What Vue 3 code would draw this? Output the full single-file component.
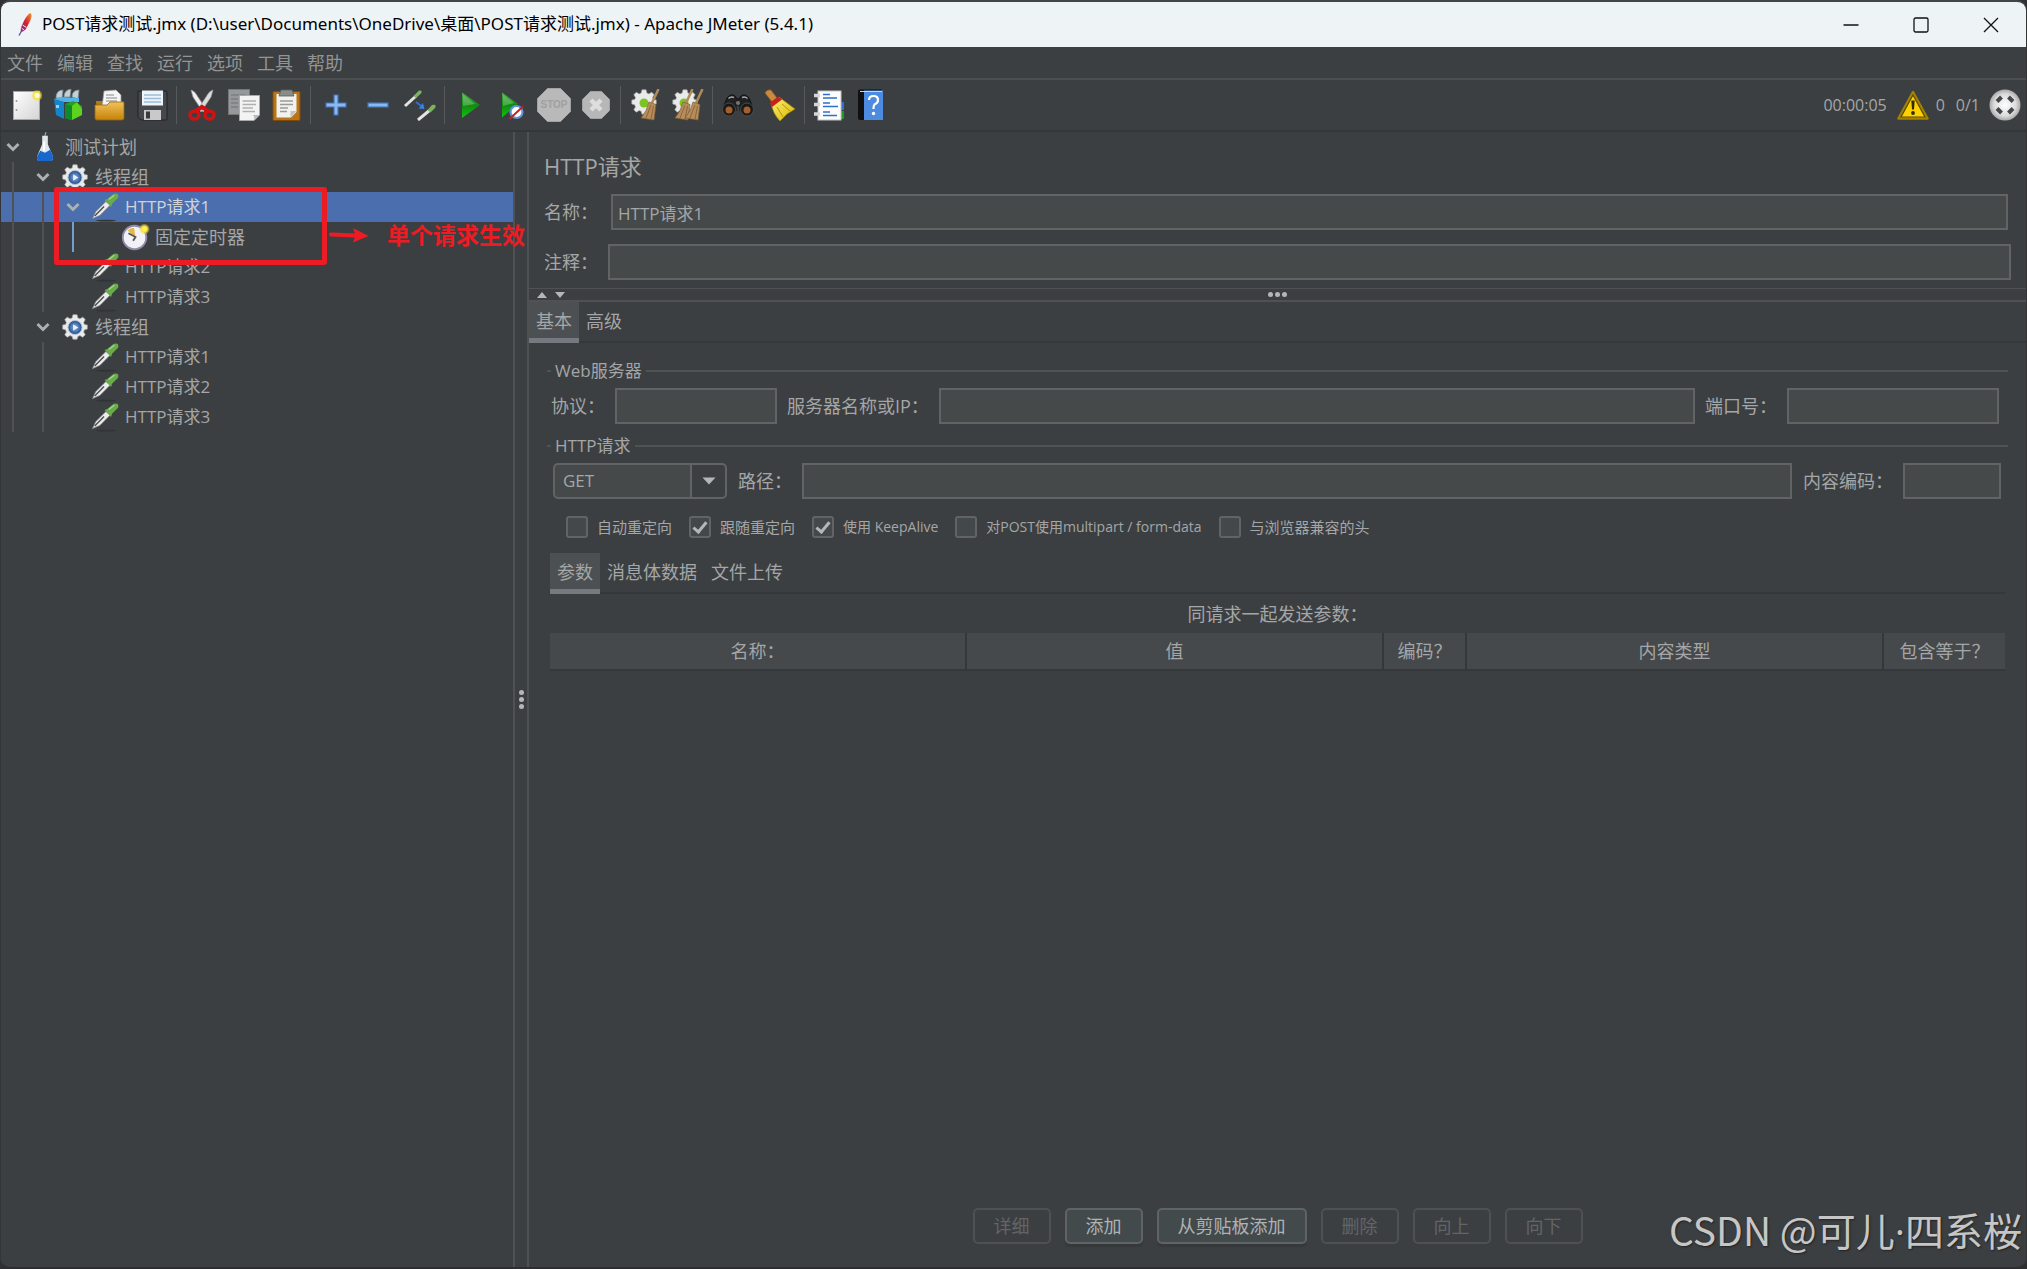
<template>
  <div class="window">
    <!-- 图标库 -->
    <svg class="sprite" aria-hidden="true">
      <defs>
        <linearGradient id="g-paper" x1="0" y1="0" x2="1" y2="1">
          <stop offset="0" stop-color="#ffffff" />
          <stop offset="1" stop-color="#d4d4d4" />
        </linearGradient>
        <linearGradient id="g-folder" x1="0" y1="0" x2="0" y2="1">
          <stop offset="0" stop-color="#f0c25a" />
          <stop offset="1" stop-color="#c58208" />
        </linearGradient>
        <linearGradient id="g-play" x1="0" y1="0" x2="0" y2="1">
          <stop offset="0" stop-color="#4fb050" />
          <stop offset="0.5" stop-color="#118a11" />
          <stop offset="1" stop-color="#12c412" />
        </linearGradient>
        <linearGradient id="g-broom" x1="0" y1="0" x2="1" y2="1">
          <stop offset="0" stop-color="#fff27a" />
          <stop offset="1" stop-color="#d8b400" />
        </linearGradient>
        <linearGradient id="g-feather" x1="1" y1="0" x2="0" y2="1">
          <stop offset="0" stop-color="#f69a23" />
          <stop offset="0.5" stop-color="#d22334" />
          <stop offset="1" stop-color="#7a2d8c" />
        </linearGradient>
        <radialGradient id="g-ball">
          <stop offset="0" stop-color="#ffffff" />
          <stop offset="0.7" stop-color="#dcdcdc" />
          <stop offset="1" stop-color="#a8a8a8" />
        </radialGradient>
        <radialGradient id="g-glow">
          <stop offset="0" stop-color="#fffbd0" />
          <stop offset="0.5" stop-color="#f5e03c" />
          <stop offset="1" stop-color="#f5e03c" stop-opacity="0" />
        </radialGradient>
        <radialGradient id="g-blue">
          <stop offset="0" stop-color="#8fb4e0" />
          <stop offset="1" stop-color="#1f4b8e" />
        </radialGradient>
      </defs>

      <symbol id="i-feather" viewBox="0 0 16 26">
        <path d="M13 1 Q16 2 13.500 8 L9 17 Q7 20 4 20 Q3 16 6 11 Q9 4 13 1Z" fill="url(#g-feather)" />
        <path d="M4.500 16 L7.500 18.500 M5.500 13 L9.500 15.500" stroke="#f4e9ef" stroke-width="1" />
        <path d="M4.500 19 L2 23.500" stroke="#6f4b97" stroke-width="1.300" />
      </symbol>

      <symbol id="i-new" viewBox="0 0 32 32">
        <rect x="3.500" y="2.500" width="26" height="28" fill="url(#g-paper)" stroke="#a6a6a6" />
        <circle cx="6.500" cy="12" r="1" fill="#999" />
        <circle cx="6.500" cy="21" r="1" fill="#999" />
        <circle cx="27" cy="6.500" r="6" fill="url(#g-glow)" />
        <circle cx="27" cy="6.500" r="2.500" fill="#fffde0" />
      </symbol>

      <symbol id="i-templates" viewBox="0 0 32 32">
        <path d="M4 9 Q4 1 11 1 L10 9Z M12 8 Q12 1 19 0 L18 8Z M20 8 Q20 1 27 1 L26 10Z" fill="#c5d0d6" stroke="#7f8b92" stroke-width="0.800" />
        <path d="M2 10 L12 13 L12 30 L4 26Z" fill="#1784c9" />
        <path d="M2 10 L9 8 L27 9 L27 13 L12 13Z" fill="#4fb4ea" />
        <path d="M4 16 h3 v3 h-3z" fill="#8fd4f7" />
        <path d="M13 15 L21 12 L30 17 L30 26 L19 31 L13 29Z" fill="#23a023" />
        <path d="M20 17 L25 13 L30 20 L30 26 L20 31Z" fill="#5ed21f" />
        <path d="M13 15 L20 17 V31 L13 29Z" fill="#0f8a2b" />
      </symbol>

      <symbol id="i-open" viewBox="0 0 32 32">
        <path d="M2 12 H28 Q29 12 29 14 V29 H3Z" fill="#b27a12" />
        <path d="M10 2 L22 1 L27 6 V18 H8Z" fill="#f5f5f5" stroke="#999" stroke-width="0.700" />
        <path d="M12 6 H20 M12 9 H23 M12 12 H23" stroke="#888" stroke-width="1.200" />
        <path d="M1 16 H13 L16 13 H30 V29 Q30 31 28 31 H3 Q1 31 1 29Z" fill="url(#g-folder)" stroke="#94670f" stroke-width="0.800" />
      </symbol>

      <symbol id="i-save" viewBox="0 0 32 32">
        <path d="M2 2 H29 Q31 2 31 4 V30 Q31 31 30 31 H5 L2 28Z" fill="#47484d" stroke="#222" />
        <rect x="6" y="1.500" width="21" height="15" fill="#edf4fa" />
        <path d="M8 6 H25 M8 9.500 H25 M8 13 H25" stroke="#9fbcd8" stroke-width="1.500" />
        <rect x="8" y="21" width="17" height="10" fill="#c9c9c9" />
        <rect x="10" y="22.500" width="4" height="7" fill="#3a3b40" />
      </symbol>

      <symbol id="i-cut" viewBox="0 0 32 32">
        <path d="M5 1 Q9 2 12 8 L20 20 L17 23 L7 8Z" fill="#f0f0f0" stroke="#999" stroke-width="0.700" />
        <path d="M27 1 Q23 2 20 8 L12 20 L15 23 L25 8Z" fill="#dcdcdc" stroke="#999" stroke-width="0.700" />
        <ellipse cx="8.500" cy="26" rx="4.500" ry="4" fill="none" stroke="#d01212" stroke-width="3.500" />
        <ellipse cx="23.500" cy="26" rx="4.500" ry="4" fill="none" stroke="#d01212" stroke-width="3.500" />
        <path d="M10 22 L16 18 L22 22" fill="none" stroke="#d01212" stroke-width="4" />
      </symbol>

      <symbol id="i-copy" viewBox="0 0 32 32">
        <rect x="0.500" y="0.500" width="21" height="25" fill="#96999a" stroke="#777" />
        <path d="M3 6 H18 M3 10 H10 M3 14 H10 M3 18 H10" stroke="#7c7f80" stroke-width="1.300" />
        <path d="M11.500 6.500 H31.500 V26 L26 31.500 H11.500Z" fill="#f3f3f3" stroke="#aaa" />
        <path d="M14.500 12 H28 M14.500 15.500 H28 M14.500 19 H25 M14.500 22.500 H27" stroke="#b0b0b0" stroke-width="1.400" />
        <path d="M31 26 L26 31 Q27 28 25 26Z" fill="#bbb" />
      </symbol>

      <symbol id="i-paste" viewBox="0 0 32 32">
        <rect x="3" y="2.500" width="27" height="29" rx="1" fill="#b9741a" stroke="#7e4c0a" />
        <path d="M6.500 5 H26.500 V23 L21 28.500 H6.500Z" fill="#f1f1ee" />
        <path d="M11 1 H22 L24 7 H9Z" fill="#8a8c88" stroke="#5d5f5b" stroke-width="0.800" />
        <path d="M10 12 H23 M10 15.500 H23 M10 19 H18 M10 22.500 H17" stroke="#9b9b9b" stroke-width="1.400" />
        <path d="M26.500 22 L20.500 28.500 V22Z" fill="#c2c2c2" />
      </symbol>

      <symbol id="i-plus" viewBox="0 0 32 32">
        <path d="M14 6 H18 V14 H26 V18 H18 V26 H14 V18 H6 V14 H14Z" fill="#89b9ee" stroke="#4276bd" stroke-width="1.200" />
      </symbol>

      <symbol id="i-minus" viewBox="0 0 32 32">
        <rect x="6" y="14" width="20" height="4" fill="#89b9ee" stroke="#4276bd" stroke-width="1.200" />
      </symbol>

      <symbol id="i-toggle" viewBox="0 0 32 32">
        <path d="M1 17 L12 7" stroke="#e4e4e4" stroke-width="3" />
        <path d="M9.500 7 L15 1.500 Q19 1 17 4.500 L12 9Z" fill="#78b55c" />
        <path d="M14 31 L26 21" stroke="#e4e4e4" stroke-width="3" />
        <path d="M23.500 21 L28 16 Q33 14.500 31 19 L26.500 23.500Z" fill="#78b55c" />
        <path d="M12 13 L18 17.500" stroke="#2c70d8" stroke-width="2" />
        <path d="M20.500 20 L14.500 19.500 L19 14Z" fill="#3b7fe6" />
      </symbol>

      <symbol id="i-start" viewBox="0 0 32 32">
        <path d="M8 3.500 L26 16 L8 29Z" fill="url(#g-play)" />
        <path d="M9 5.500 L21 15 L9 17Z" fill="#8ed08f" opacity="0.450" />
      </symbol>

      <symbol id="i-start-no-timers" viewBox="0 0 32 32">
        <path d="M6 3.500 L22 15 L6 28.500Z" fill="url(#g-play)" />
        <path d="M7 5.500 L18 14 L7 17Z" fill="#8ed08f" opacity="0.450" />
        <circle cx="20.500" cy="23" r="6" fill="#fff" stroke="#5e93d8" stroke-width="2.200" />
        <path d="M13.500 30 L27 17.500" stroke="#c62222" stroke-width="2" />
      </symbol>

      <symbol id="i-stop" viewBox="0 0 34 34">
        <path d="M10.500 0.500 H23.500 L33.500 10.500 V23.500 L23.500 33.500 H10.500 L0.500 23.500 V10.500Z" fill="#b9b9b9" stroke="#a2a2a2" />
      </symbol>

      <symbol id="i-shutdown" viewBox="0 0 32 32">
        <path d="M10.500 2.500 H21.500 L29.500 10.500 V21.500 L21.500 29.500 H10.500 L2.500 21.500 V10.500Z" fill="#b7b7b7" stroke="#a2a2a2" />
        <path d="M11 11 L21 21 M21 11 L11 21" stroke="#dedede" stroke-width="4.500" />
      </symbol>

      <symbol id="i-gear" viewBox="0 0 32 32">
        <path
          d="M13.500 1 H18.500 L19.500 5 L22 6 L25.500 4 L28.500 7 L26.500 10.500 L27.500 13 L31 13.500 V18.500 L27.500 19.500 L26.500 22 L28.500 25.500 L25.500 28.500 L22 26.500 L19.500 27.500 L18.500 31 H13.500 L12.500 27.500 L10 26.500 L6.500 28.500 L3.500 25.500 L5.500 22 L4.500 19.500 L1 18.500 V13.500 L4.500 13 L5.500 10.500 L3.500 7 L6.500 4 L10 6 L12.500 5Z"
          fill="#e9eaea" stroke="#a9abab" stroke-width="0.800" />
      </symbol>

      <symbol id="i-broomlet" viewBox="0 0 20 32">
        <path d="M18.500 0 L12 14" stroke="#b08a58" stroke-width="2.500" />
        <path d="M9 13 L16 15.500 Q15 24 14 31 L1 29 Q7 22 9 13Z" fill="#b78d5c" stroke="#7d5c34" stroke-width="0.700" />
        <path d="M11 16 L6 29 M13.500 17 L11 30" stroke="#7d5c34" stroke-width="0.800" />
      </symbol>

      <symbol id="i-clear" viewBox="0 0 32 32">
        <use href="#i-gear" x="1" y="0" width="26" height="26" />
        <circle cx="14" cy="14" r="4.500" fill="#7cc520" />
        <use href="#i-broomlet" x="10" y="0" width="20" height="32" />
      </symbol>

      <symbol id="i-clear-all" viewBox="0 0 32 32">
        <use href="#i-gear" x="0" y="0" width="26" height="26" />
        <circle cx="12" cy="14" r="4.500" fill="#7cc520" />
        <use href="#i-broomlet" x="2" y="0" width="20" height="32" />
        <use href="#i-broomlet" x="12" y="0" width="20" height="32" />
      </symbol>

      <symbol id="i-search" viewBox="0 0 32 32">
        <path d="M5 9 Q9 4 13 7 L15 10 H17 L19 7 Q23 4 27 9 L31 19 L18 22 V16 H14 V22 L1 19Z" fill="#202122" stroke="#0f0f10" />
        <path d="M6.500 9.500 Q9 7 12 8.500 M20 8.500 Q23 7 25.500 9.500" stroke="#a7a7a7" stroke-width="1.500" fill="none" />
        <circle cx="7" cy="20.500" r="6.500" fill="#19191a" stroke="#4c4c4d" />
        <circle cx="25" cy="20.500" r="6.500" fill="#19191a" stroke="#4c4c4d" />
        <circle cx="7" cy="21" r="3.500" fill="#a65f2b" />
        <circle cx="25" cy="21" r="3.500" fill="#a65f2b" />
        <circle cx="16" cy="14" r="2" fill="#777" />
      </symbol>

      <symbol id="i-reset" viewBox="0 0 32 32">
        <path d="M1 4 Q3 0 7 1 L13 9 L8 13Z" fill="#c98a3f" stroke="#8a5a1e" stroke-width="0.700" />
        <path d="M7 14 L15 8 L31 20 L23 25 L16 32 Q9 25 7 14Z" fill="url(#g-broom)" stroke="#a58a00" stroke-width="0.700" />
        <path d="M6 13.500 L14.500 7.500 L18 10.500 L8 18Z" fill="#c8201c" />
        <path d="M13 18 L19 28 M18 15 L26 22" stroke="#b39600" stroke-width="1" />
      </symbol>

      <symbol id="i-functions" viewBox="0 0 32 32">
        <rect x="25" y="13" width="5" height="8" fill="#2f6fd6" />
        <rect x="25" y="22" width="5" height="8" fill="#1f9b2a" />
        <rect x="4" y="2" width="23" height="29" fill="#fcfcfc" stroke="#c4c4c4" />
        <path d="M0 6.500 H6 M0 15.500 H6 M0 25 H6" stroke="#d6d6d6" stroke-width="3.500" />
        <path d="M9 5.500 H16 M9 9 H23 M9 14 H16 M9 17.500 H24 M9 23 H16 M9 26.500 H23" stroke="#2d6fcd" stroke-width="1.500" />
      </symbol>

      <symbol id="i-help" viewBox="0 0 32 32">
        <path d="M2 2 Q2 0.500 4 0.500 H26 V31 H4 Q2 31 2 29Z" fill="#111" />
        <rect x="8" y="1.500" width="19" height="29.500" fill="#4d8be0" />
        <path d="M4 2.500 H26" stroke="#c7d7ea" stroke-width="1.200" />
        <path d="M13 11 Q13 7 17.500 7 Q22 7 22 11 Q22 14 18.500 15.500 Q17.500 16.500 17.500 20" fill="none" stroke="#fff" stroke-width="2.200" />
        <circle cx="17.500" cy="24.500" r="1.700" fill="#fff" />
      </symbol>

      <symbol id="i-warning" viewBox="0 0 32 30">
        <path d="M16 2 L30.500 28.500 H1.500Z" fill="#ffd100" stroke="#a28200" stroke-width="2.500" stroke-linejoin="round" />
        <path d="M16 5 L28 27 H4Z" fill="none" stroke="#5a4800" stroke-width="1.200" />
        <path d="M14.300 10.500 H17.700 L17 19.500 H15Z" fill="#332b00" />
        <circle cx="16" cy="23" r="1.900" fill="#332b00" />
      </symbol>

      <symbol id="i-status" viewBox="0 0 32 32">
        <circle cx="16" cy="16" r="15.500" fill="url(#g-ball)" />
        <path d="M8 12.500 L12.500 8 M19.500 8 L24 12.500 M8 19.500 L12.500 24 M19.500 24 L24 19.500" stroke="#44474a" stroke-width="4" />
      </symbol>

      <symbol id="i-plan" viewBox="0 0 32 32">
        <path d="M17 0 L15.500 6" stroke="#9aa" stroke-width="1.200" />
        <path d="M13 4 H19 V13 L24.500 26 Q25 31 21 31 H11 Q7 31 7.500 26 L13 13Z" fill="#dfe7ec" />
        <path d="M11 20 L16 22 L21.500 19 L24.500 26 Q25 31 21 31 H11 Q7 31 7.500 26Z" fill="#1767cf" />
        <path d="M15 10 V20" stroke="#fff" stroke-width="2" />
      </symbol>

      <symbol id="i-group" viewBox="0 0 32 32">
        <use href="#i-gear" x="2" y="2" width="28" height="28" />
        <circle cx="16" cy="16.500" r="7.500" fill="url(#g-blue)" stroke="#b9c6d8" />
        <path d="M14 13 L19.500 16.500 L14 20Z" fill="#e9f1fa" />
      </symbol>

      <symbol id="i-sampler" viewBox="0 0 32 32">
        <ellipse cx="17" cy="30.500" rx="11" ry="1" fill="#313436" />
        <path d="M2.500 28.500 L6 21 L17 10 L21.500 14 L10.500 25Z" fill="#ececec" stroke="#77797b" stroke-width="0.800" />
        <path d="M5 25.500 L15 15.500" stroke="#4a4d4f" stroke-width="1.500" />
        <path d="M15.500 8.500 L18.500 7.500 L25 2 Q31.500 0.500 30 6 L23.500 12.500 L22.500 16Z" fill="#69ab4b" />
        <path d="M20 8 L26 3.500" stroke="#a2d68a" stroke-width="1.500" />
      </symbol>

      <symbol id="i-timer" viewBox="0 0 32 32">
        <circle cx="15.500" cy="16.500" r="12.500" fill="#f2f1f5" stroke="#8f8ba8" stroke-width="2" />
        <path d="M8 9 Q12 6 15 6.500 L16.500 16Z" fill="#e4b74a" />
        <path d="M9 12 L16.500 16 L14 20" fill="none" stroke="#555" stroke-width="2" />
        <circle cx="26" cy="7.500" r="6" fill="url(#g-glow)" />
        <circle cx="26" cy="7.500" r="2.500" fill="#fdf04f" />
      </symbol>
    </svg>

    <header class="title-bar">
      <svg class="feather"><use href="#i-feather" /></svg>
      <h1 class="title">POST请求测试.jmx (D:\user\Documents\OneDrive\桌面\POST请求测试.jmx) - Apache JMeter (5.4.1)</h1>
      <button class="win-btn" aria-label="最小化">
        <svg viewBox="0 0 16 16"><path d="M0.500 8 H15.500" /></svg>
      </button>
      <button class="win-btn" aria-label="最大化">
        <svg viewBox="0 0 16 16"><rect x="1" y="1" width="14" height="14" rx="1.500" /></svg>
      </button>
      <button class="win-btn" aria-label="关闭">
        <svg viewBox="0 0 16 16"><path d="M1 1 L15 15 M15 1 L1 15" /></svg>
      </button>
    </header>

    <nav class="menu-bar">
      <button v-for="menu in menus" :key="menu" class="menu">{{ menu }}</button>
    </nav>

    <div class="toolbar">
      <div v-for="(group, gi) in tools" :key="gi" class="tool-group">
        <button v-for="tool in group" :key="tool" class="tool" :aria-label="tool">
          <svg :class="{ large: tool === 'stop' }"><use :href="`#i-${tool}`" /></svg>
          <span v-if="tool === 'stop'" class="stop-text">STOP</span>
        </button>
      </div>
      <div class="status">
        <span>00:00:05</span>
        <svg class="warning"><use href="#i-warning" /></svg>
        <span>0</span>
        <span class="threads">0/1</span>
        <svg class="state"><use href="#i-status" /></svg>
      </div>
    </div>

    <main class="workspace">
      <aside class="tree">
        <div
          v-for="(node, index) in nodes"
          :key="index"
          class="node"
          :class="{ selected: node.selected }"
        >
          <span
            v-for="level in node.depth"
            :key="level"
            class="guide"
            :class="{ active: level === 3 }"
          ></span>
          <span class="toggle">
            <svg v-if="node.open" viewBox="0 0 14 10"><path d="M1.500 2 L7 7.500 L12.500 2" /></svg>
          </span>
          <svg class="node-icon"><use :href="`#i-${node.icon}`" /></svg>
          <span :class="{ mixed: node.icon === 'sampler' }">{{ node.name }}</span>
        </div>

        <!-- 标注 -->
        <div class="mark-box"></div>
        <div class="mark-note">
          <svg viewBox="0 0 40 16"><path d="M2 7.500 L26 8.500" stroke="#ed1c24" stroke-width="4" stroke-linecap="round" /><path d="M24 1 L39.500 9 L24 15.500 L26.500 8.500Z" fill="#ed1c24" /></svg>
          <span>单个请求生效</span>
        </div>
      </aside>

      <div class="splitter"><i></i><i></i><i></i></div>

      <section class="panel">
        <div class="panel-head">
          <h2>HTTP请求</h2>
          <div class="field name-field">
            <label for="name">名称：</label>
            <input id="name" v-model="name" type="text" />
          </div>
          <div class="field comment-field">
            <label for="comment">注释：</label>
            <input id="comment" type="text" />
          </div>
        </div>

        <div class="divider">
          <svg class="arrows" viewBox="0 0 30 8"><path d="M0 7 L5 1 L10 7Z M18 1 H28 L23 7Z" /></svg>
          <div class="dots"><i></i><i></i><i></i></div>
        </div>

        <div class="tabs">
          <button class="tab current">基本</button>
          <button class="tab">高级</button>
        </div>

        <div class="panel-body">
          <fieldset>
            <legend>Web服务器</legend>
            <div class="line">
              <label for="protocol" class="w-short">协议：</label>
              <input id="protocol" class="protocol" type="text" />
              <label for="server" class="w-server">服务器名称或IP：</label>
              <input id="server" class="grow" type="text" />
              <label for="port" class="w-port">端口号：</label>
              <input id="port" class="port" type="text" />
            </div>
          </fieldset>

          <fieldset>
            <legend>HTTP请求</legend>
            <div class="line request-line">
              <div class="combo">
                <select v-model="method" aria-label="请求方法">
                  <option>GET</option>
                  <option>POST</option>
                </select>
                <svg viewBox="0 0 14 8"><path d="M0.500 0.500 H13.500 L7 7.500Z" /></svg>
              </div>
              <label for="path" class="w-short">路径：</label>
              <input id="path" class="grow" type="text" />
              <label for="encoding" class="w-encoding">内容编码：</label>
              <input id="encoding" class="encoding" type="text" />
            </div>
            <div class="checks">
              <label v-for="item in options" :key="item.label" :class="{ latin: item.latin }">
                <input v-model="item.checked" type="checkbox" />
                <span>{{ item.label }}</span>
              </label>
            </div>
          </fieldset>

          <div class="tabs inner">
            <button class="tab current">参数</button>
            <button class="tab">消息体数据</button>
            <button class="tab">文件上传</button>
          </div>

          <table>
            <caption>同请求一起发送参数：</caption>
            <colgroup>
              <col />
              <col />
              <col class="col-encode" />
              <col />
              <col class="col-equals" />
            </colgroup>
            <thead>
              <tr>
                <th v-for="column in columns" :key="column">{{ column }}</th>
              </tr>
            </thead>
          </table>

          <div class="actions">
            <button v-for="action in actions" :key="action.label" :disabled="action.disabled">
              {{ action.label }}
            </button>
          </div>
        </div>
      </section>
    </main>

    <div class="watermark">CSDN @可儿<span class="dot">·</span>四系桜</div>
  </div>
</template>

<script setup>
import { ref } from 'vue'

const menus = ['文件', '编辑', '查找', '运行', '选项', '工具', '帮助']

const tools = [
  ['new', 'templates', 'open', 'save'],
  ['cut', 'copy', 'paste'],
  ['plus', 'minus', 'toggle'],
  ['start', 'start-no-timers', 'stop', 'shutdown'],
  ['clear', 'clear-all'],
  ['search', 'reset'],
  ['functions', 'help']
]

const nodes = [
  { name: '测试计划', icon: 'plan', depth: 0, open: true },
  { name: '线程组', icon: 'group', depth: 1, open: true },
  { name: 'HTTP请求1', icon: 'sampler', depth: 2, open: true, selected: true },
  { name: '固定定时器', icon: 'timer', depth: 3 },
  { name: 'HTTP请求2', icon: 'sampler', depth: 2 },
  { name: 'HTTP请求3', icon: 'sampler', depth: 2 },
  { name: '线程组', icon: 'group', depth: 1, open: true },
  { name: 'HTTP请求1', icon: 'sampler', depth: 2 },
  { name: 'HTTP请求2', icon: 'sampler', depth: 2 },
  { name: 'HTTP请求3', icon: 'sampler', depth: 2 }
]

const columns = ['名称：', '值', '编码？', '内容类型', '包含等于？']

const name = ref('HTTP请求1')
const method = ref('GET')

const options = ref([
  { label: '自动重定向', checked: false },
  { label: '跟随重定向', checked: true },
  { label: '使用 KeepAlive', checked: true, latin: true },
  { label: '对POST使用multipart / form-data', checked: false, latin: true },
  { label: '与浏览器兼容的头', checked: false }
])

const actions = [
  { label: '详细', disabled: true },
  { label: '添加', disabled: false },
  { label: '从剪贴板添加', disabled: false },
  { label: '删除', disabled: true },
  { label: '向上', disabled: true },
  { label: '向下', disabled: true }
]
</script>

<style>
body {
  margin: 0;
  background: #2f3032;
}
</style>

<style scoped>
.window {
  position: relative;
  display: flex;
  flex-direction: column;
  box-sizing: border-box;
  height: 100vh;
  border: 1px solid #333537;
  border-top: 2px solid #454545;
  border-bottom: 2px solid #2c2e30;
  border-radius: 10px;
  overflow: hidden;
  background: #3c3f41;
  color: #a4a6a7;
  font-family: "Open Sans", "Noto Sans CJK SC", sans-serif;
  font-size: 18px;
  line-height: 24px;
}

.sprite {
  position: absolute;
  width: 0;
  height: 0;
}

button,
input,
select {
  box-sizing: border-box;
  margin: 0;
  font: inherit;
  color: inherit;
}

button {
  padding: 0;
  border: 0;
  background: none;
}

.mixed {
  font-size: 17px;
}

/* 标题栏 */
.title-bar {
  display: flex;
  align-items: center;
  height: 45px;
  background: #eef3f6;
  color: #000;
}

.feather {
  width: 16px;
  height: 26px;
  margin: 0 9px 0 16px;
}

.title {
  flex: 1;
  margin: 0;
  padding-bottom: 2px;
  font-family: "Noto Sans", "Noto Sans CJK SC", sans-serif;
  font-size: 17px;
  font-weight: 400;
}

.win-btn {
  width: 70px;
  height: 45px;
}

.win-btn svg {
  display: block;
  width: 16px;
  height: 16px;
  margin: 0 auto;
  fill: none;
  stroke: #111;
  stroke-width: 1.3;
}

/* 菜单与工具栏 */
.menu-bar {
  display: flex;
  gap: 14px;
  height: 31px;
  padding-left: 6px;
  border-bottom: 2px solid #4d4e4f;
}

.menu {
  color: #929495;
}

.toolbar {
  display: flex;
  align-items: center;
  height: 50px;
  padding: 0 5px 0 4px;
  border-bottom: 2px solid #34373a;
}

.tool-group {
  display: flex;
}

.tool-group + .tool-group {
  margin-left: 3px;
  padding-left: 4px;
  border-left: 1px solid #58595a;
}

.tool {
  position: relative;
  display: flex;
  align-items: center;
  justify-content: center;
  width: 42px;
  height: 38px;
}

.tool svg {
  width: 32px;
  height: 32px;
}

.tool svg.large {
  width: 34px;
  height: 34px;
}

.stop-text {
  position: absolute;
  inset: 0;
  color: #a0a0a0;
  font-family: "Liberation Sans", sans-serif;
  font-size: 10px;
  font-weight: 700;
  line-height: 38px;
  text-align: center;
}

.status {
  display: flex;
  align-items: center;
  margin-left: auto;
  font-size: 16px;
}

.warning {
  width: 32px;
  height: 30px;
  margin: 0 7px 0 10px;
}

.threads {
  margin: 0 9px 0 11px;
}

.state {
  width: 32px;
  height: 32px;
}

/* 左侧树 */
.workspace {
  flex: 1;
  display: flex;
  min-height: 0;
}

.tree {
  position: relative;
  flex: none;
  width: 512px;
}

.node {
  display: flex;
  align-items: center;
  height: 30px;
}

.node.selected {
  background: #4b6eaf;
  color: #d0d4da;
}

.guide {
  flex: none;
  width: 17px;
  height: 30px;
  margin-left: 11px;
  border-left: 2px solid #4f5152;
}

.guide.active {
  border-left-color: #6fa0d0;
}

.toggle {
  display: flex;
  justify-content: center;
  width: 24px;
}

.toggle svg {
  width: 14px;
  height: 10px;
  fill: none;
  stroke: #adb0b2;
  stroke-width: 3;
}

.node-icon {
  width: 32px;
  height: 30px;
  margin: 0 4px;
}

.mark-box {
  position: absolute;
  top: 55px;
  left: 53px;
  box-sizing: border-box;
  width: 273px;
  height: 78px;
  border: 5px solid #ed1c24;
  border-radius: 3px;
}

.mark-note {
  position: absolute;
  z-index: 1;
  top: 87px;
  left: 328px;
  display: flex;
  align-items: center;
  gap: 18px;
  color: #ed1c24;
  font-size: 23px;
  font-weight: 700;
  line-height: 32px;
  white-space: nowrap;
}

.mark-note svg {
  width: 40px;
  height: 16px;
}

.splitter {
  flex: none;
  display: flex;
  flex-direction: column;
  align-items: center;
  justify-content: center;
  gap: 2px;
  width: 12px;
  border: solid #505152;
  border-width: 0 2px;
}

.splitter i,
.dots i {
  width: 5px;
  height: 5px;
  border-radius: 50%;
  background: #b4b6b8;
}

/* 右侧面板 */
.panel {
  flex: 1;
  display: flex;
  flex-direction: column;
  min-width: 0;
}

.panel-head {
  padding: 18px 15px 8px;
}

h2 {
  margin: 0 0 12px;
  font-size: 22px;
  font-weight: 400;
  line-height: 32px;
}

.field {
  display: flex;
  align-items: center;
}

.field + .field {
  margin-top: 14px;
}

.name-field label {
  width: 67px;
}

.name-field {
  margin-right: 3px;
}

.comment-field label {
  width: 64px;
}

input[type="text"] {
  height: 36px;
  min-width: 0;
  padding: 0 5px;
  border: 2px solid #616364;
  border-radius: 0;
  outline: none;
  background: #45494a;
}

.field input {
  flex: 1;
  font-size: 17px;
}

.divider {
  position: relative;
  display: flex;
  align-items: center;
  justify-content: center;
  height: 11px;
  border: solid #505152;
  border-width: 1px 0 2px;
}

.arrows {
  position: absolute;
  left: 8px;
  width: 30px;
  height: 8px;
  fill: #b4b6b8;
}

.dots {
  display: flex;
  gap: 2px;
}

.tabs {
  display: flex;
  height: 39px;
  border-bottom: 2px solid #35383a;
}

.tab {
  height: 41px;
  padding: 2px 7px 0;
  border-bottom: 5px solid transparent;
}

.tab.current {
  border-bottom-color: #747a80;
  background: #4c5052;
}

.panel-body {
  flex: 1;
  display: flex;
  flex-direction: column;
  padding: 16px 21px 23px;
}

fieldset {
  min-width: 0;
  margin: 0 -3px 10px;
  padding: 5px 9px 0 4px;
  border: 0;
  border-top: 2px solid #515253;
}

legend {
  padding: 0 4px;
  font-size: 17px;
}

.line {
  display: flex;
  align-items: center;
}

.request-line {
  margin: 0 -2px 17px 2px;
}

.w-short {
  width: 64px;
}

.w-server {
  width: 152px;
  margin-left: 10px;
}

.w-port {
  width: 82px;
  margin-left: 10px;
}

.w-encoding {
  width: 100px;
  margin-left: 11px;
}

.protocol {
  width: 162px;
}

.port {
  width: 212px;
}

.encoding {
  width: 98px;
}

.grow {
  flex: 1;
}

.combo {
  position: relative;
  margin-right: 11px;
}

.combo select {
  display: block;
  width: 174px;
  height: 36px;
  padding: 0 8px;
  border: 2px solid #616364;
  border-radius: 5px;
  appearance: none;
  outline: none;
  background: linear-gradient(to left, #3c3f41 33px, #616364 33px, #616364 35px, #45494a 35px);
  font-size: 17px;
}

.combo svg {
  position: absolute;
  top: 14px;
  right: 11px;
  width: 14px;
  height: 8px;
  fill: #b4b6b8;
  pointer-events: none;
}

.checks {
  display: flex;
  gap: 17px;
  padding-left: 15px;
  font-size: 15px;
  line-height: 22px;
}

.checks label {
  display: flex;
  align-items: center;
  gap: 9px;
  white-space: nowrap;
}

.checks .latin {
  font-size: 14px;
}

.checks input {
  display: flex;
  justify-content: center;
  width: 22px;
  height: 22px;
  border: 2px solid #616364;
  border-radius: 3px;
  appearance: none;
  background: #43494a;
}

.checks input:checked::after {
  content: "";
  width: 5px;
  height: 11px;
  margin-top: 1px;
  border: solid #b4b6b8;
  border-width: 0 3px 3px 0;
  transform: rotate(40deg);
}

.tabs.inner {
  margin-top: 5px;
}

/* 参数表 */
table {
  width: 100%;
  border-spacing: 0;
  table-layout: fixed;
}

caption {
  padding: 8px 0 7px;
}

.col-encode {
  width: 83px;
}

.col-equals {
  width: 121px;
}

th {
  height: 36px;
  padding: 0;
  border-right: 2px solid #35383a;
  border-bottom: 2px solid #35383a;
  background: #45494b;
  font-weight: 400;
}

th:last-child {
  border-right: 0;
}

.actions {
  display: flex;
  justify-content: center;
  gap: 14px;
  margin-top: auto;
}

.actions button {
  height: 36px;
  padding: 0 19px;
  border: 2px solid #5f6364;
  border-radius: 5px;
  background: #434a4c;
  box-shadow: 0 3px 1px #36393b;
  color: #b0b3b4;
}

.actions button:disabled {
  border-color: #4e5051;
  background: none;
  box-shadow: none;
  color: #626567;
}

.watermark {
  position: absolute;
  right: 4px;
  bottom: 8px;
  color: #c6c6c6;
  font-family: "Noto Sans CJK SC", sans-serif;
  font-size: 39px;
  line-height: 56px;
  text-shadow: 1px 1px 2px #222;
  pointer-events: none;
}

.watermark .dot {
  font-family: "Open Sans", sans-serif;
}
</style>
